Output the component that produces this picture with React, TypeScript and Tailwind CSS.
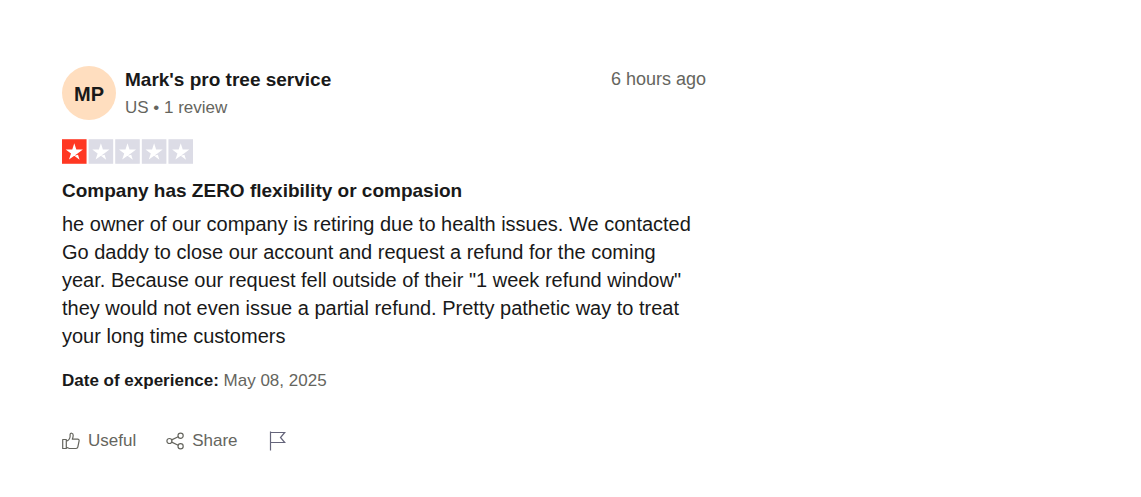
const ACTION = "flex cursor-pointer items-center text-[17px] leading-6 text-[#65655e]";

const STARS = [
  { x: 0, fill: "#ff3722" },
  { x: 104, fill: "#dcdce6" },
  { x: 208, fill: "#dcdce6" },
  { x: 312, fill: "#dcdce6" },
  { x: 416, fill: "#dcdce6" },
];

function StarRating() {
  return (
    <svg viewBox="0 0 512 96" className="mt-[17px] h-[25px] w-[131px]" role="img" aria-label="Rated 1 out of 5 stars">
      {STARS.map((s) => (
        <g key={s.x} transform={`translate(${s.x} 0)`}>
          <path fill={s.fill} d="M0 0h96v96H0z" />
          <path
            fill="#fff"
            d="M48 64.7L62.6 61l6.1 18.8zM81.6 40.4H55.9L48 16.2l-7.9 24.2H14.4l20.8 15-7.9 24.2 20.8-15 12.8-9.2z"
          />
        </g>
      ))}
    </svg>
  );
}

function ThumbIcon() {
  return (
    <svg viewBox="0 0 18 18" className="size-[18px]" fill="none" stroke="currentColor" strokeWidth="1.2" strokeLinejoin="round" aria-hidden="true">
      <path d="M.7 7.5h3.600v9H.7zM4.300 9.300C6.600 8.500 7.900 6.600 8.100 4.500V2.600C8.100.600 11.200.700 11.200 3.300c0 1.400-.4 2.700-.9 3.900h5.400c1 0 1.600.8 1.400 1.700l-1.300 6.300c-.2.900-.8 1.300-1.700 1.300H8.300c-1.600 0-2.500-1.100-4-1.100" />
    </svg>
  );
}

function ShareIcon() {
  return (
    <svg viewBox="0 0 18 18" className="size-[18px]" fill="none" stroke="currentColor" strokeWidth="1.2" aria-hidden="true">
      <circle cx="3.4" cy="9" r="2.5" />
      <circle cx="14.6" cy="3.7" r="2.6" />
      <circle cx="14.6" cy="14.3" r="2.6" />
      <path d="M5.700 7.900l6.500-3.100M5.700 10.100l6.500 3.100" />
    </svg>
  );
}

function FlagIcon() {
  return (
    <svg viewBox="0 0 18 20" className="h-5 w-[18px]" fill="none" stroke="currentColor" strokeWidth="1.2" aria-hidden="true">
      <path d="M2.500.500v19M2.500 1.500h14.200L12.500 6.500l4.200 5H2.500" />
    </svg>
  );
}

export default function App() {
  return (
    <main className="bg-white px-[62px] pt-[66px] pb-11 font-['Liberation_Sans',Arial,sans-serif] text-[#191919]">
      <article className="max-w-[644px]">
        <header className="flex items-start justify-between">
          <div className="flex items-start gap-[9px]">
            <div className="flex size-[54px] items-center justify-center rounded-full bg-[#ffdebf] pt-0.5 text-xl font-bold">
              MP
            </div>
            <div>
              <h2 className="text-[19px] leading-7 font-bold">Mark's pro tree service</h2>
              <p className="text-[17px] leading-7 text-[#65655e]">US • 1 review</p>
            </div>
          </div>
          <time className="text-lg leading-[26px] text-[#65655e]">6 hours ago</time>
        </header>
        <StarRating />
        <h3 className="mt-[13px] text-[19px] leading-7 font-bold">Company has ZERO flexibility or compasion</h3>
        <p className="mt-[5px] pr-2 text-xl leading-7">
          he owner of our company is retiring due to health issues. We contacted Go daddy to close our account and request a
          refund for the coming year. Because our request fell outside of their "1 week refund window" they would not even
          issue a partial refund. Pretty pathetic way to treat your long time customers
        </p>
        <p className="mt-[19px] text-[17px] leading-6">
          <b>Date of experience:</b> <span className="text-[#65655e]">May 08, 2025</span>
        </p>
        <footer className="mt-9 flex items-center gap-[30px]">
          <button className={`${ACTION} gap-2`}>
            <ThumbIcon />
            Useful
          </button>
          <button className={`${ACTION} gap-2`}>
            <ShareIcon />
            Share
          </button>
          <button className="cursor-pointer text-[#65657b]" aria-label="Report review">
            <FlagIcon />
          </button>
        </footer>
      </article>
    </main>
  );
}
